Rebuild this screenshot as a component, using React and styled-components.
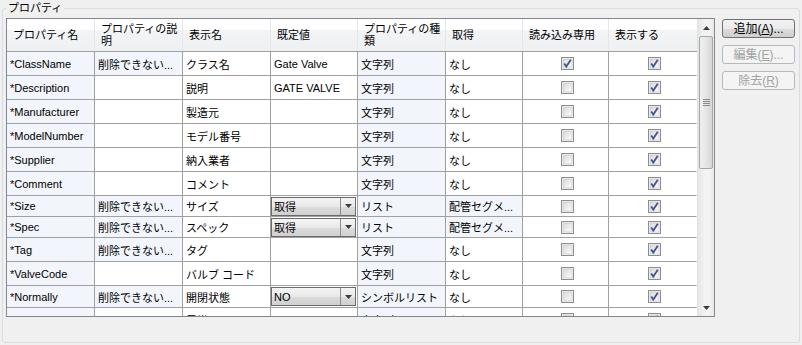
import React from 'react';
import styled, { createGlobalStyle } from 'styled-components';

const GlobalStyle = createGlobalStyle`
  body {
    margin: 0;
    background: #f0f0f0;
    font-family: "Liberation Sans", "Noto Sans CJK JP", sans-serif;
    font-size: 11px;
    color: #000;
  }
`;

const COLS = '88px 88px 88px 87px 88px 77px 86px 88px';

const GroupBox = styled.fieldset`
  box-sizing: border-box;
  margin: 1px 0 0 2px;
  width: 798px;
  height: 342px;
  padding: 3px 4px 0 3px;
  border: 1px solid #d5dfe5;
  border-radius: 3px;
  display: flex;
  align-items: flex-start;
  gap: 7px;
`;

const Caption = styled.legend`
  padding: 0 2px;
  font-size: 11px;
  line-height: 14px;
`;

const Grid = styled.div`
  box-sizing: border-box;
  width: 709px;
  height: 299px;
  border: 1px solid #828790;
  background: #fff;
  display: flex;
  overflow: hidden;
`;

const Sheet = styled.div`
  flex: 1;
  overflow: hidden;
`;

const HeaderRow = styled.div`
  display: grid;
  grid-template-columns: ${COLS};
  height: 33px;
  box-sizing: border-box;
  border-bottom: 1px solid #a0a0a0;
  background: linear-gradient(#ffffff 0, #ffffff 11px, #f3f4f6 11px, #eff0f2 100%);
`;

const HeadCell = styled.div`
  display: flex;
  align-items: center;
  padding-left: 6px;
  line-height: 12px;
  border-right: 1px solid ${p => (p.$last ? 'transparent' : '#e3e6ea')};
`;

const Row = styled.div`
  display: grid;
  grid-template-columns: ${COLS};
  height: ${p => p.$h}px;
`;

const Cell = styled.div`
  box-sizing: border-box;
  display: flex;
  align-items: center;
  justify-content: ${p => (p.$center ? 'center' : 'flex-start')};
  padding: ${p => (p.$combo ? '0 1px 0 0' : '0 0 0 3px')};
  white-space: nowrap;
  overflow: hidden;
  background: ${p => (p.$ro ? '#f2f5fb' : '#ffffff')};
  border-right: 1px solid ${p => (p.$last ? 'transparent' : '#a0a0a0')};
  border-bottom: 1px solid #a0a0a0;
`;

const Combo = styled.div`
  box-sizing: border-box;
  display: flex;
  width: 100%;
  height: 19px;
  border: 1px solid #6a6a6a;
  background: linear-gradient(#f4f4f4 0%, #e9e9e9 50%, #dcdcdc 51%, #d0d0d0 100%);
`;

const ComboText = styled.span`
  flex: 1;
  display: flex;
  align-items: center;
  padding-left: 2px;
`;

const ComboButton = styled.span`
  width: 14px;
  display: flex;
  align-items: center;
  justify-content: center;
  border-left: 1px solid #8c8c8c;
`;

const ScrollBar = styled.div`
  width: 17px;
  display: flex;
  flex-direction: column;
  background: linear-gradient(90deg, #e6e6e6, #f3f3f3 40%, #f3f3f3 70%, #e8e8e8);
  border-left: 1px solid #e2e2e2;
  box-sizing: border-box;
`;

const ScrollArrow = styled.div`
  height: 17px;
  flex: none;
  display: flex;
  align-items: center;
  justify-content: center;
  margin-top: ${p => (p.$down ? 'auto' : '0')};
`;

const Thumb = styled.div`
  height: 133px;
  margin: 0 1px;
  box-sizing: border-box;
  border: 1px solid #a6a6a6;
  border-radius: 2px;
  background: linear-gradient(90deg, #f0f0f0, #e6e6e6 50%, #d6d6d6);
  display: flex;
  flex-direction: column;
  align-items: center;
  justify-content: center;
  gap: 1px;
`;

const Grip = styled.span`
  width: 7px;
  height: 1px;
  background: #8a8a8a;
`;

const Buttons = styled.div`
  display: flex;
  flex-direction: column;
  gap: 7px;
  margin-top: 1px;
`;

const Button = styled.button`
  box-sizing: border-box;
  width: 73px;
  height: 19px;
  padding: 0;
  font-family: "Liberation Sans", "Noto Sans CJK JP", sans-serif;
  font-size: 12px;
  line-height: 16px;
  border-radius: 3px;
  border: 1px solid ${p => (p.disabled ? '#b5b9bc' : '#707070')};
  background: ${p =>
    p.disabled
      ? '#f4f4f4'
      : 'linear-gradient(#f2f2f2 0%, #ebebeb 50%, #dddddd 51%, #cfcfcf 100%)'};
  color: ${p => (p.disabled ? '#a2a2a2' : '#000')};
  u { text-decoration: underline; }
`;

const Arrow = ({ down }) => (
  <svg width="7" height="4" viewBox="0 0 7 4">
    <polygon points={down ? '0,0 7,0 3.5,4' : '0,4 7,4 3.5,0'} fill="#3c3c3c" />
  </svg>
);

const Check = ({ on }) => (
  <svg width="13" height="13" viewBox="0 0 13 13">
    <defs>
      <linearGradient id="cbg" x1="0" y1="0" x2="1" y2="1">
        <stop offset="0" stopColor="#dadada" />
        <stop offset="1" stopColor="#fbfbfb" />
      </linearGradient>
    </defs>
    <rect x="0.5" y="0.5" width="12" height="12" fill="#f4f4f4" stroke="#8f8f8f" />
    <rect x="2" y="2" width="9" height="9" fill="url(#cbg)" stroke="#c4c4c4" strokeWidth="0.6" />
    {on && (
      <path d="M3.2 6.4 L5.3 9.6 L9.8 2.8" fill="none" stroke="#3f5596" strokeWidth="1.8" />
    )}
  </svg>
);

const headers = [
  'プロパティ名',
  <>プロパティの説<br />明</>,
  '表示名',
  '既定値',
  <>プロパティの種<br />類</>,
  '取得',
  '読み込み専用',
  '表示する',
];

const DESC = '削除できない...';

const rows = [
  { name: '*ClassName', desc: DESC, label: 'クラス名', def: 'Gate Valve', kind: '文字列', src: 'なし', ro: true, h: 24 },
  { name: '*Description', label: '説明', def: 'GATE VALVE', kind: '文字列', src: 'なし', h: 24 },
  { name: '*Manufacturer', label: '製造元', kind: '文字列', src: 'なし', h: 24 },
  { name: '*ModelNumber', label: 'モデル番号', kind: '文字列', src: 'なし', h: 24 },
  { name: '*Supplier', label: '納入業者', kind: '文字列', src: 'なし', h: 24 },
  { name: '*Comment', label: 'コメント', kind: '文字列', src: 'なし', h: 24 },
  { name: '*Size', desc: DESC, label: 'サイズ', combo: '取得', kind: 'リスト', src: '配管セグメ...', srcRo: true, h: 21 },
  { name: '*Spec', desc: DESC, label: 'スペック', combo: '取得', kind: 'リスト', src: '配管セグメ...', srcRo: true, h: 21 },
  { name: '*Tag', desc: DESC, label: 'タグ', kind: '文字列', src: 'なし', h: 24 },
  { name: '*ValveCode', label: 'バルブ コード', kind: '文字列', src: 'なし', h: 24 },
  { name: '*Normally', desc: DESC, label: '開閉状態', combo: 'NO', kind: 'シンボルリスト', src: 'なし', h: 22 },
  { name: '*Rating', label: '異常', kind: '文字列', src: 'なし', h: 24 },
];

export default function App() {
  return (
    <>
      <GlobalStyle />
      <GroupBox>
        <Caption>プロパティ</Caption>
        <Grid>
          <Sheet>
            <HeaderRow>
              {headers.map((h, i) => (
                <HeadCell key={i} $last={i === headers.length - 1}>{h}</HeadCell>
              ))}
            </HeaderRow>
            {rows.map(r => (
              <Row key={r.name} $h={r.h}>
                <Cell $ro>{r.name}</Cell>
                <Cell $ro={!!r.desc}>{r.desc}</Cell>
                <Cell>{r.label}</Cell>
                <Cell $combo={!!r.combo}>
                  {r.combo ? (
                    <Combo>
                      <ComboText>{r.combo}</ComboText>
                      <ComboButton><Arrow down /></ComboButton>
                    </Combo>
                  ) : (
                    r.def
                  )}
                </Cell>
                <Cell $ro>{r.kind}</Cell>
                <Cell $ro={r.srcRo}>{r.src}</Cell>
                <Cell $center><Check on={r.ro} /></Cell>
                <Cell $center $last><Check on /></Cell>
              </Row>
            ))}
          </Sheet>
          <ScrollBar>
            <ScrollArrow><Arrow /></ScrollArrow>
            <Thumb>
              <Grip /><Grip /><Grip /><Grip />
            </Thumb>
            <ScrollArrow $down><Arrow down /></ScrollArrow>
          </ScrollBar>
        </Grid>
        <Buttons>
          <Button>追加(<u>A</u>)...</Button>
          <Button disabled>編集(<u>E</u>)...</Button>
          <Button disabled>除去(<u>R</u>)</Button>
        </Buttons>
      </GroupBox>
    </>
  );
}
